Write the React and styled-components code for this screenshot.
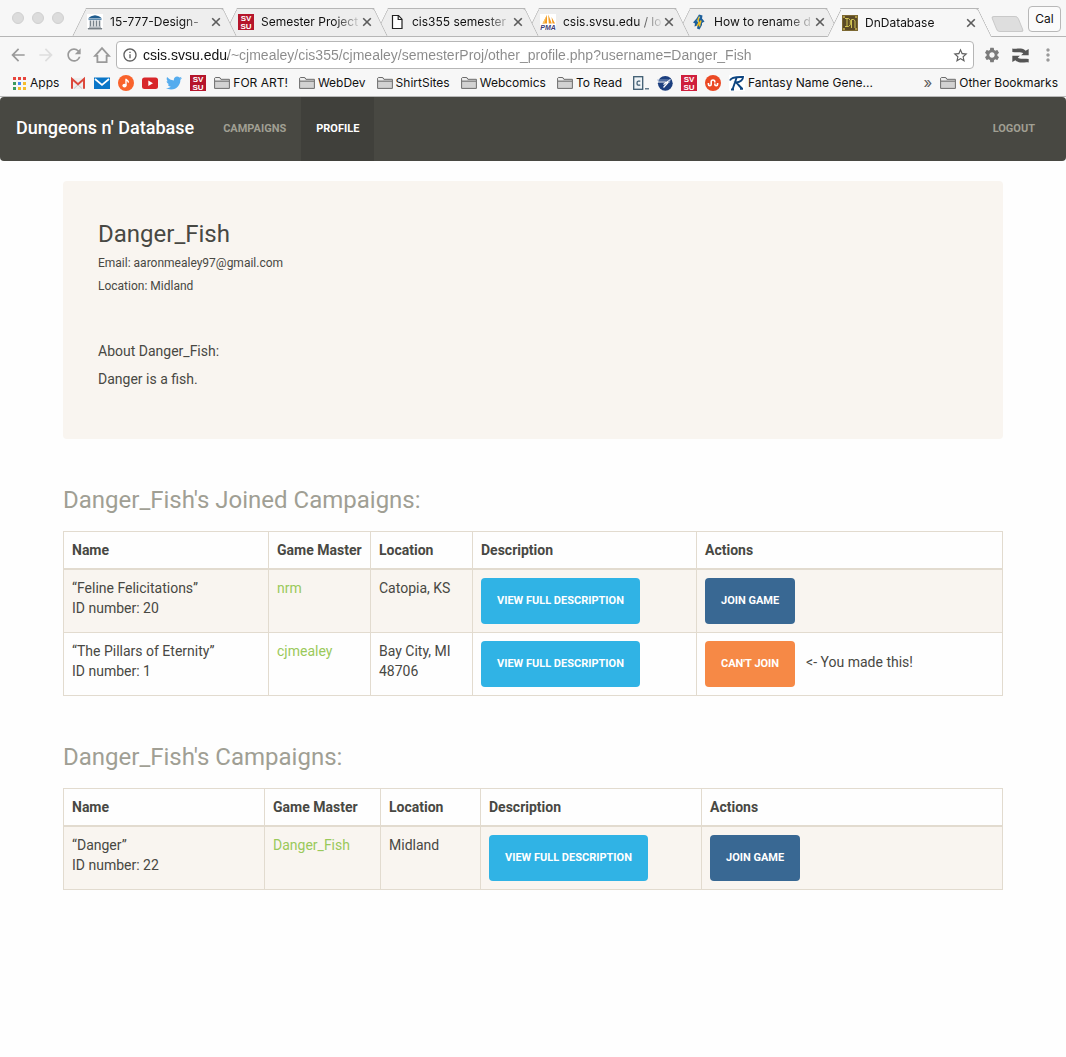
import React from "react";
import styled, { createGlobalStyle, css } from "styled-components";
import {
  MdArrowBack,
  MdArrowForward,
  MdRefresh,
  MdInfoOutline,
  MdStarBorder,
  MdSettings,
  MdMoreVert,
} from "react-icons/md";
import { FaTwitter } from "react-icons/fa";

const GlobalStyle = createGlobalStyle`
  * { box-sizing: border-box; }
  body {
    margin: 0;
    background: #fefefe;
    color: #484843;
    font-family: Roboto, "Liberation Sans", sans-serif;
    font-size: 14px;
    line-height: 20px;
  }
  button, input { font: inherit; }
  svg { display: block; }
`;

/* ---------- Browser window ---------- */

const Browser = styled.header`
  background: #f7f7f7;
  color: #111;
  font-family: Inter, "Liberation Sans", sans-serif;
  font-size: 12px;
  line-height: 16px;
  border-bottom: 1px solid #b9b9b9;
`;

const TabStrip = styled.div`
  display: flex;
  align-items: flex-end;
  height: 37px;
  padding: 0 5px 1px 12px;
  box-shadow: inset 0 -1px 0 #b6b6b6;
`;

const Lights = styled.div`
  display: flex;
  gap: 8px;
  align-self: center;
  margin-right: 8px;
`;

const Light = styled.button`
  width: 12px;
  height: 12px;
  padding: 0;
  border: 1px solid #d0d0d0;
  border-radius: 50%;
  background: #dcdcdc;
`;

const Tabs = styled.nav`
  display: flex;
  align-items: flex-end;
`;

const edge = css`
  content: "";
  position: absolute;
  z-index: -1;
  top: 0;
  bottom: 0;
  border-top: 1px solid #b6b6b6;
`;

const Tab = styled.div`
  position: relative;
  isolation: isolate;
  z-index: ${(p) => p.$layer};
  display: flex;
  align-items: center;
  width: 165px;
  height: ${(p) => (p.$active ? 29 : 28)}px;
  margin-right: -14px;
  margin-bottom: ${(p) => (p.$active ? -1 : 0)}px;
  padding: 0 16px 0 15px;

  &::before {
    ${edge}
    left: 7px;
    right: 20px;
    border-left: 1px solid #b6b6b6;
    border-top-left-radius: 3px;
    background: ${(p) => (p.$active ? "#f7f7f7" : "#eeeeee")};
    transform: skewX(-26deg);
  }
  &::after {
    ${edge}
    left: 20px;
    right: 7px;
    border-right: 1px solid #b6b6b6;
    border-top-right-radius: 3px;
    background: ${(p) => (p.$active ? "#f7f7f7" : "#eeeeee")};
    transform: skewX(26deg);
  }
`;

const TabLink = styled.a`
  display: flex;
  align-items: center;
  flex: 1;
  min-width: 0;
  gap: 7px;
  color: inherit;
  text-decoration: none;
`;

const TabTitle = styled.span`
  flex: 1;
  min-width: 0;
  white-space: nowrap;
  mask-image: linear-gradient(to right, #000 calc(100% - 28px), transparent);
`;

const CloseButton = styled.button`
  display: flex;
  padding: 0;
  border: 0;
  background: none;
  color: #5c5c5c;
`;

const NewTab = styled.button`
  width: 27px;
  height: 16px;
  margin: 0 0 4px 16px;
  padding: 0;
  border: 1px solid #c9c9c9;
  border-radius: 3px;
  background: #dedede;
  transform: skewX(22deg);
`;

const UserButton = styled.button`
  align-self: flex-start;
  width: 33px;
  height: 26px;
  margin: 6px 0 0 auto;
  padding: 0;
  border: 1px solid #b8b8b8;
  border-radius: 4px;
  background: #fbfbfb;
  color: #111;
`;

const Toolbar = styled.div`
  display: flex;
  align-items: center;
  gap: 8px;
  padding: 4px 8px 3px 8px;
`;

const ToolButton = styled.button`
  display: flex;
  justify-content: center;
  width: 20px;
  padding: 0;
  border: 0;
  background: none;
  color: ${(p) => (p.$faint ? "#dedede" : p.$dark ? "#7b7b7b" : "#9a9a9a")};
`;

const AddressBar = styled.form`
  display: flex;
  align-items: center;
  flex: 1;
  gap: 5px;
  height: 28px;
  margin-left: -4px;
  padding: 0 4px 0 5px;
  border: 1px solid #b6b6b6;
  border-radius: 4px;
  background: #fff;
  color: #5f5f5f;
`;

const Address = styled.input`
  flex: 1;
  min-width: 0;
  height: 24px;
  padding: 0;
  border: 0;
  outline: 0;
  font-family: "Liberation Sans", sans-serif;
  font-size: 14px;
  background: linear-gradient(to right, #111 85px, #8a8a8a 85px);
  background-clip: text;
  -webkit-text-fill-color: transparent;
`;

const Bookmarks = styled.nav`
  display: flex;
  align-items: center;
  gap: 8px;
  height: 24px;
  padding: 0 8px 2px 11px;
`;

const Bookmark = styled.a`
  display: flex;
  align-items: center;
  gap: 3px;
  padding-right: ${(p) => (p.$labelled ? 3 : 0)}px;
  color: inherit;
  text-decoration: none;
  white-space: nowrap;
`;

const BookmarksEnd = styled.div`
  display: flex;
  align-items: center;
  gap: 8px;
  margin-left: auto;
`;

const Overflow = styled.button`
  padding: 0;
  border: 0;
  background: none;
  color: #5c5c5c;
  font-size: 15px;
`;

/* ---------- Small drawings ---------- */

const Icon = ({ size = 16, children }) => (
  <svg width={size} height={size} viewBox="0 0 16 16" fill="none" aria-hidden="true">
    {children}
  </svg>
);

const CloseIcon = () => (
  <svg width="10" height="10" viewBox="0 0 10 10" aria-hidden="true">
    <path d="M1.2 1.2l7.6 7.6M8.8 1.2l-7.6 7.6" stroke="currentColor" strokeWidth="1.6" />
  </svg>
);

const ArchiveIcon = () => (
  <Icon>
    <rect width="16" height="16" fill="#fff" />
    <path d="M1 4.6C3 2.6 5 1.6 8 1.2c3 .4 5 1.4 7 3.4z" fill="#1f5c8e" />
    <path d="M1.5 5.6h13" stroke="#4d7fa6" />
    <path d="M3.5 6.5v6M6.5 6.5v6M9.5 6.5v6M12.5 6.5v6" stroke="#77828b" strokeWidth="1.6" />
    <path d="M2 13.2h12" stroke="#8c969e" />
    <path d="M.8 14.8h14.4" stroke="#555f66" strokeWidth="1.2" />
  </Icon>
);

const SvsuIcon = ({ color = "#b5152b" }) => (
  <Icon>
    <rect width="16" height="16" fill={color} />
    <g fill="#fff" fontFamily="Liberation Sans, sans-serif" fontSize="8" fontWeight="700" textAnchor="middle">
      <text x="8" y="7.2">SV</text>
      <text x="8" y="14.8">SU</text>
    </g>
  </Icon>
);

const PageIcon = () => (
  <Icon>
    <path d="M3.5 1.5h6l3.5 3.7v9.3H3.5z" fill="#fff" stroke="#222" strokeWidth="1.2" />
    <path d="M9.2 1.5v4H13" stroke="#222" strokeWidth="1.2" />
  </Icon>
);

const PmaIcon = () => (
  <Icon>
    <rect width="16" height="16" fill="#fff" />
    <path d="M7 1L2.5 9.5H7zM8.2 .5l.6 9h3zM11.5 3l1 6.5H15z" fill="#f39a1e" />
    <path d="M7 1L4.4 9.5H2.5z" fill="#fbc56b" />
    <text x="8" y="15.8" fill="#3d3d78" fontFamily="Liberation Sans, sans-serif" fontSize="7" fontWeight="700" fontStyle="italic" textAnchor="middle">PMA</text>
  </Icon>
);

const FigureIcon = () => (
  <Icon>
    <path d="M8 .5l3.5 1-.5 3 2.5 3-2.5 1.5v2l-2.5 4.5-2.5-1 .5-3-3 1 .5-3-2-1 3.5-4z" fill="#1d5f9c" />
    <path d="M8.5 2.5L7 6l1 3-2 3M10 6.5l-1 3-.5 3" stroke="#f0bf22" strokeWidth="1.5" />
    <path d="M6 6l1 2M8 3l1 1" stroke="#7fc4dd" />
  </Icon>
);

const DnIcon = () => (
  <Icon>
    <rect width="16" height="16" fill="#5b4a26" />
    <rect x=".5" y=".5" width="15" height="15" stroke="#7d6933" />
    <path d="M1 1h2v2H1zM13 1h2v2h-2zM1 13h2v2H1zM13 13h2v2h-2z" fill="#b09a44" />
    <path d="M3 3.500h3.600l1.700 1.700v4.600l-1.700 1.700H3M5 3.500v8M9.500 4.500V13M9.500 4.500h2l1.500 1.200V13" stroke="#d3c654" />
  </Icon>
);

const HomeIcon = () => (
  <Icon size={18}>
    <path d="M8 1.8L1.8 8.7h2.1v5.6h8.2V8.7h2.1z" stroke="currentColor" strokeWidth="1.6" />
  </Icon>
);

const swoosh = "M.3 1.3c2 1 5-.3 8 .1 2 .3 3.6 1.1 4.5 2.2l2.9-1.8V7.8H8.6l2-1.9C8.6 4.3 5 5.4.3 4.7z";

const SyncIcon = () => (
  <Icon size={17}>
    <path d={swoosh} fill="#555" />
    <path d={swoosh} fill="#555" transform="rotate(180 8 8)" />
  </Icon>
);

const AppsIcon = () => {
  const colors = ["#e8453c", "#e8453c", "#e8453c", "#3c9a5f", "#4688f1", "#f5bc2c", "#3c9a5f", "#f5bc2c", "#f5bc2c"];
  return (
    <Icon>
      {colors.map((c, i) => (
        <rect key={i} x={2 + (i % 3) * 5} y={2 + Math.floor(i / 3) * 5} width="3" height="3" fill={c} />
      ))}
    </Icon>
  );
};

const GmailIcon = () => (
  <Icon>
    <rect x="1" y="3" width="14" height="11" rx="1" fill="#eeeeee" />
    <path d="M4 13.5l4-3.6 4 3.6" stroke="#c9c9c9" />
    <path d="M2 13.8V4l6 5.2L14 4v9.8" stroke="#dc483c" strokeWidth="2" />
  </Icon>
);

const MailIcon = () => (
  <Icon>
    <rect y="2.5" width="16" height="11.5" fill="#0a76c8" />
    <path d="M1 4l7 6 7-6" stroke="#fff" strokeWidth="1.7" />
  </Icon>
);

const MusicIcon = () => (
  <Icon>
    <circle cx="8" cy="8" r="8" fill="#f9632c" />
    <ellipse cx="6.5" cy="10.6" rx="2.1" ry="1.9" fill="#fff" />
    <path d="M8 10.5V3.8c.4 1.8 2.6 1.4 2.4 3.8" stroke="#fff" strokeWidth="1.4" />
  </Icon>
);

const VideoIcon = () => (
  <Icon>
    <rect y="2.5" width="16" height="11.5" rx="2.5" fill="#d8272b" />
    <path d="M6.3 5.5v5.4L11 8.2z" fill="#fff" />
  </Icon>
);

const FolderIcon = () => (
  <Icon>
    <path d="M.6 13.4V3.2l.8-.7h4.4l1.2 1.8h8.4v9.1z" fill="#d2d2d2" stroke="#6d6d6d" />
    <path d="M1 6.2h14" stroke="#6d6d6d" />
    <path d="M1.2 4.6h5M1.2 3.6h4" stroke="#f1f1f1" />
  </Icon>
);

const CodeIcon = () => (
  <Icon>
    <rect x=".7" y="1.7" width="9" height="12.6" fill="#eef3f6" stroke="#3d5b70" strokeWidth="1.3" />
    <path d="M7.3 6.2H5.2c-1.6 0-1.6 4 0 4h2.1" stroke="#3d5b70" strokeWidth="1.3" />
    <path d="M12 13.8h4" stroke="#3d5b70" strokeWidth="1.2" />
  </Icon>
);

const GlobeIcon = () => (
  <Icon>
    <circle cx="8.3" cy="8.3" r="7.4" fill="#1c3f7f" />
    <path d="M1 7h10M11.5 7L6.5 12.5M6.5 9.5L13.5 4.5" stroke="#fff" strokeWidth="1.2" />
    <path d="M0 5h9.5c3 0 4 .5 2.5 3" stroke="#9fb2d3" strokeWidth=".8" />
  </Icon>
);

const StumbleIcon = () => (
  <Icon>
    <circle cx="8" cy="8" r="8" fill="#eb4924" />
    <path d="M3.4 8v1.2a1.4 1.4 0 0 0 2.8 0V6.8a1.8 1.8 0 0 1 3.6 0v.7M12.6 8v1.2a1.4 1.4 0 0 1-2.8 0V8.5" stroke="#fff" strokeWidth="1.6" />
  </Icon>
);

const RuneIcon = () => (
  <Icon>
    <rect width="16" height="16" fill="#fff" />
    <path d="M1 5.5C2 2 8 1.8 14 2c0 3-3 5-7 5.5 2 1.5 4 4.5 6 6M7.5 3L3.5 14.5M2 14.5h3M11 13.8h3" stroke="#0c4480" strokeWidth="1.9" />
  </Icon>
);

/* ---------- Site ---------- */

const Navbar = styled.nav`
  display: flex;
  align-items: stretch;
  height: 64px;
  padding: 0 16px;
  border-radius: 4px;
  background: #484842;
`;

const Brand = styled.a`
  display: flex;
  align-items: center;
  padding-bottom: 2px;
  margin-right: 14px;
  color: #fff;
  font-size: 18px;
  font-weight: 500;
  text-decoration: none;
`;

const NavLink = styled.a`
  display: flex;
  align-items: center;
  padding: 0 15px;
  margin-left: ${(p) => (p.$end ? "auto" : "0")};
  background: ${(p) => (p.$active ? "#40403b" : "transparent")};
  color: ${(p) => (p.$active ? "#fff" : "#a09f93")};
  font-size: 11px;
  font-weight: 700;
  text-decoration: none;
  text-transform: uppercase;
`;

const Container = styled.main`
  max-width: 970px;
  margin: 20px auto 0;
  padding: 0 15px;
`;

const Profile = styled.section`
  padding: 39px 35px 46px;
  border-radius: 4px;
  background: #f9f5f0;
`;

const ProfileName = styled.h1`
  margin: 0 0 4px;
  font-size: 24px;
  font-weight: 400;
  line-height: 28px;
`;

const Detail = styled.p`
  margin: 0;
  font-size: 12px;
  line-height: 23px;
`;

const About = styled.div`
  margin-top: 39px;
  line-height: 28px;

  p { margin: 0; }
`;

const Section = styled.section`
  margin-top: 47px;
`;

const SectionTitle = styled.h2`
  margin: 0 0 17px;
  color: #a09f94;
  font-size: 24px;
  font-weight: 400;
  line-height: 28px;
`;

const Table = styled.table`
  width: 100%;
  border-collapse: collapse;
  border: 1px solid #e2dbcf;

  th, td {
    padding: 8px;
    border: 1px solid #e2dbcf;
    text-align: left;
    vertical-align: top;
  }
  th {
    border-bottom-width: 2px;
    font-weight: 700;
  }
  tbody tr:nth-child(odd) { background: #f9f5f0; }
`;

const Col = styled.col`
  width: ${(p) => (p.$width ? `${p.$width}px` : "auto")};
`;

const UserLink = styled.a`
  color: #9ac95a;
  text-decoration: none;
`;

const fills = { info: "#30b3e5", primary: "#396893", warning: "#f68946" };

const Button = styled.button`
  padding: 12px 16px;
  border: 0;
  border-radius: 4px;
  background: ${(p) => fills[p.$kind]};
  color: #fff;
  font-size: 11px;
  font-weight: 700;
  line-height: 22px;
  text-transform: uppercase;
  vertical-align: top;
`;

const Actions = styled.div`
  display: flex;
  align-items: baseline;
  gap: 11px;
`;

const tabs = [
  { title: "15-777-Design-", Glyph: ArchiveIcon },
  { title: "Semester Project", Glyph: SvsuIcon },
  { title: "cis355 semester", Glyph: PageIcon },
  { title: "csis.svsu.edu / lo", Glyph: PmaIcon },
  { title: "How to rename d", Glyph: FigureIcon },
  { title: "DnDatabase", Glyph: DnIcon, active: true },
];

const bookmarks = [
  { name: "Apps", Glyph: AppsIcon, label: true },
  { name: "Gmail", Glyph: GmailIcon },
  { name: "Mail", Glyph: MailIcon },
  { name: "Music", Glyph: MusicIcon },
  { name: "YouTube", Glyph: VideoIcon },
  { name: "Twitter", Glyph: () => <FaTwitter size={16} color="#55acee" /> },
  { name: "SVSU", Glyph: SvsuIcon },
  { name: "FOR ART!", Glyph: FolderIcon, label: true },
  { name: "WebDev", Glyph: FolderIcon, label: true },
  { name: "ShirtSites", Glyph: FolderIcon, label: true },
  { name: "Webcomics", Glyph: FolderIcon, label: true },
  { name: "To Read", Glyph: FolderIcon, label: true },
  { name: "Codecademy", Glyph: CodeIcon },
  { name: "Globe", Glyph: GlobeIcon },
  { name: "SVSU portal", Glyph: () => <SvsuIcon color="#cf1f3c" /> },
  { name: "StumbleUpon", Glyph: StumbleIcon },
  { name: "Fantasy Name Gene...", Glyph: RuneIcon, label: true },
];

const joined = [
  { name: "Feline Felicitations", id: 20, master: "nrm", location: "Catopia, KS" },
  { name: "The Pillars of Eternity", id: 1, master: "cjmealey", location: "Bay City, MI 48706", own: true },
];

const owned = [{ name: "Danger", id: 22, master: "Danger_Fish", location: "Midland" }];

function CampaignTable({ title, rows, widths }) {
  return (
    <Section>
      <SectionTitle>{title}</SectionTitle>
      <Table>
        <colgroup>
          {widths.map((w, i) => <Col key={i} $width={w} />)}
          <Col />
        </colgroup>
        <thead>
          <tr>
            <th>Name</th>
            <th>Game Master</th>
            <th>Location</th>
            <th>Description</th>
            <th>Actions</th>
          </tr>
        </thead>
        <tbody>
          {rows.map((r) => (
            <tr key={r.id}>
              <td>“{r.name}”<br />ID number: {r.id}</td>
              <td><UserLink href="#">{r.master}</UserLink></td>
              <td>{r.location}</td>
              <td><Button type="button" $kind="info">View full description</Button></td>
              <td>
                <Actions>
                  <Button type="button" $kind={r.own ? "warning" : "primary"}>
                    {r.own ? "Can't join" : "Join game"}
                  </Button>
                  {r.own && <span>&lt;- You made this!</span>}
                </Actions>
              </td>
            </tr>
          ))}
        </tbody>
      </Table>
    </Section>
  );
}

export default function App() {
  return (
    <>
      <GlobalStyle />
      <Browser>
        <TabStrip>
          <Lights>
            <Light aria-label="Close window" />
            <Light aria-label="Minimize" />
            <Light aria-label="Zoom" />
          </Lights>
          <Tabs aria-label="Tabs">
            {tabs.map(({ title, Glyph, active }, i) => (
              <Tab key={title} $active={active} $layer={active ? 10 : 9 - i}>
                <TabLink href="#">
                  <Glyph />
                  <TabTitle>{title}</TabTitle>
                </TabLink>
                <CloseButton aria-label={`Close ${title}`}><CloseIcon /></CloseButton>
              </Tab>
            ))}
          </Tabs>
          <NewTab aria-label="New tab" />
          <UserButton>Cal</UserButton>
        </TabStrip>
        <Toolbar>
          <ToolButton aria-label="Back"><MdArrowBack size={20} /></ToolButton>
          <ToolButton $faint aria-label="Forward"><MdArrowForward size={20} /></ToolButton>
          <ToolButton aria-label="Reload"><MdRefresh size={20} /></ToolButton>
          <ToolButton aria-label="Home"><HomeIcon /></ToolButton>
          <AddressBar>
            <MdInfoOutline size={16} />
            <Address
              aria-label="Address"
              defaultValue="csis.svsu.edu/~cjmealey/cis355/cjmealey/semesterProj/other_profile.php?username=Danger_Fish"
            />
            <MdStarBorder size={17} />
          </AddressBar>
          <ToolButton $dark aria-label="Settings"><MdSettings size={18} /></ToolButton>
          <ToolButton $dark aria-label="Sync"><SyncIcon /></ToolButton>
          <ToolButton aria-label="Menu"><MdMoreVert size={20} /></ToolButton>
        </Toolbar>
        <Bookmarks aria-label="Bookmarks">
          {bookmarks.map(({ name, Glyph, label }) => (
            <Bookmark key={name} href="#" aria-label={name} $labelled={label}>
              <Glyph />
              {label && name}
            </Bookmark>
          ))}
          <BookmarksEnd>
            <Overflow aria-label="More bookmarks">»</Overflow>
            <Bookmark href="#"><FolderIcon />Other Bookmarks</Bookmark>
          </BookmarksEnd>
        </Bookmarks>
      </Browser>

      <Navbar>
        <Brand href="#">Dungeons n' Database</Brand>
        <NavLink href="#">Campaigns</NavLink>
        <NavLink href="#" $active>Profile</NavLink>
        <NavLink href="#" $end>Logout</NavLink>
      </Navbar>

      <Container>
        <Profile>
          <ProfileName>Danger_Fish</ProfileName>
          <Detail>Email: aaronmealey97@gmail.com</Detail>
          <Detail>Location: Midland</Detail>
          <About>
            <p>About Danger_Fish:</p>
            <p>Danger is a fish.</p>
          </About>
        </Profile>
        <CampaignTable title="Danger_Fish's Joined Campaigns:" rows={joined} widths={[205, 102, 102, 224]} />
        <CampaignTable title="Danger_Fish's Campaigns:" rows={owned} widths={[201, 116, 100, 221]} />
      </Container>
    </>
  );
}
